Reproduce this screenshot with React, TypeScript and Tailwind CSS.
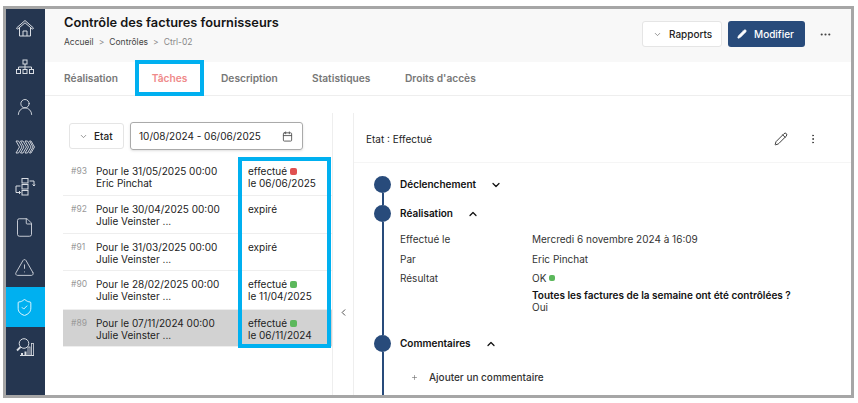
import { Calendar, ChevronDown, ChevronLeft, ChevronUp, EllipsisVertical, Ellipsis, File, Pencil, Plus, ShieldCheck, TriangleAlert, UserRound } from "lucide-react";

const HomeIcon = () => (
	<svg width="22" height="22" viewBox="0 0 22 22" fill="none" stroke="currentColor" strokeWidth="1">
		<path d="M2.500 11 11 3.500l8.500 7.500-1 1.200L11 5.800l-7.500 6.400z" />
		<path d="M5.500 11v8h11v-8" />
		<path d="M9 19v-5h4v5" />
	</svg>
);

const NetworkIcon = () => (
	<svg width="22" height="22" viewBox="0 0 22 22" fill="none" stroke="currentColor" strokeWidth="1">
		<rect x="9" y="4" width="4" height="4" />
		<path d="M11 8v3M4.500 13.500V11h13v2.500M11 11v2.500" />
		<rect x="2.500" y="13.500" width="4" height="4" />
		<rect x="9" y="13.500" width="4" height="4" />
		<rect x="15.500" y="13.500" width="4" height="4" />
	</svg>
);

const Chevrons = () => (
	<svg width="22" height="22" viewBox="0 0 22 22" fill="none" stroke="currentColor" strokeWidth="0.9">
		<path d="M2 5h2.500L8 11l-3.500 6H2l3.500-6z" />
		<path d="M6.500 5H9l3.500 6L9 17H6.500L10 11z" />
		<path d="M11 5h2.500L17 11l-3.500 6H11l3.500-6z" />
		<path d="M15.500 5H17l3.500 6-3.500 6h-1.500l3.500-6z" />
	</svg>
);

const Flow = () => (
	<svg width="22" height="22" viewBox="0 0 22 22" fill="none" stroke="currentColor" strokeWidth="1">
		<rect x="8" y="2.500" width="6" height="4.500" />
		<rect x="8" y="8.500" width="6" height="4.500" />
		<rect x="8" y="14.500" width="6" height="4.500" />
		<path d="M15.500 5H20v5M18.500 8.500l1.500 1.500 1-1.500" />
		<path d="M6.500 10H2v6.500h4.500M5 15l1.500 1.500L5 18" />
	</svg>
);

const SearchChart = () => (
	<svg width="22" height="22" viewBox="0 0 22 22" fill="none" stroke="currentColor" strokeWidth="1">
		<circle cx="10" cy="7.500" r="4.800" />
		<path d="M6.500 11 3 14.500" strokeWidth="1.800" />
		<path d="M6 19.500h14" />
		<rect x="7" y="17" width="2" height="2.500" fill="currentColor" stroke="none" />
		<rect x="10.500" y="15.500" width="2" height="4" fill="currentColor" stroke="none" />
		<rect x="14" y="11" width="2" height="8.500" strokeWidth="0.800" />
		<rect x="17.500" y="7.500" width="2" height="12" strokeWidth="0.800" />
	</svg>
);

const sideItems = [
	{ icon: <HomeIcon />, height: "h-[38px]" },
	{ icon: <NetworkIcon />, height: "h-10" },
	{ icon: <UserRound size={20} strokeWidth={1.1} />, height: "h-10" },
	{ icon: <Chevrons />, height: "h-10" },
	{ icon: <Flow />, height: "h-10" },
	{ icon: <File size={21} strokeWidth={1} />, height: "h-10" },
	{ icon: <TriangleAlert size={21} strokeWidth={1} />, height: "h-10" },
	{ icon: <ShieldCheck size={19} strokeWidth={1.1} />, height: "h-10", active: true },
	{ icon: <SearchChart />, height: "h-10" },
];

const tabs = [
	{ label: "Réalisation", className: "ml-[19px] w-[71px]" },
	{ label: "Tâches", className: "w-[69px] justify-center text-[#ef8a8a] border-b border-[#ef8a8a]" },
	{ label: "Description", className: "ml-[17px] w-[91px]" },
	{ label: "Statistiques", className: "w-[93px]" },
	{ label: "Droits d'accès", className: "w-[100px]" },
];

type Task = {
	id: string;
	due: string;
	who: string;
	status: string;
	dot?: string;
	date?: string;
	selected?: boolean;
	height: string;
};

const tasks: Task[] = [
	{ id: "#93", due: "Pour le 31/05/2025 00:00", who: "Eric Pinchat", status: "effectué", dot: "bg-[#e05050]", date: "le 06/06/2025", height: "h-[38px]" },
	{ id: "#92", due: "Pour le 30/04/2025 00:00", who: "Julie Veinster ...", status: "expiré", height: "h-[38px]" },
	{ id: "#91", due: "Pour le 31/03/2025 00:00", who: "Julie Veinster ...", status: "expiré", height: "h-[37px]" },
	{ id: "#90", due: "Pour le 28/02/2025 00:00", who: "Julie Veinster ...", status: "effectué", dot: "bg-[#5cb85c]", date: "le 11/04/2025", height: "h-[39px]" },
	{ id: "#89", due: "Pour le 07/11/2024 00:00", who: "Julie Veinster ...", status: "effectué", dot: "bg-[#5cb85c]", date: "le 06/11/2024", selected: true, height: "h-[37px]" },
];

const Node = () => (
	<div className="flex w-[17px] flex-col items-center self-stretch">
		<div className="h-[17px] w-[17px] shrink-0 rounded-full bg-[#284b7b]" />
		<div className="w-[2px] flex-1 bg-[#284b7b]" />
	</div>
);

const App = () => {
	return (
		<div className="h-[403px] w-[858px] overflow-hidden bg-white pl-[3px] pt-[6px] font-['Inter',sans-serif] text-[#222]">
			<div className="relative flex h-[392px] w-[851px] border-[3px] border-[#a6a6a6]">
				<aside className="flex w-[39px] shrink-0 flex-col bg-[#253650] text-[#d9dde3]">
					{sideItems.map((item, i) => (
						<div key={i} className={`flex items-center justify-center pr-[2px] ${item.height} ${item.active ? "bg-[#00b0f0] text-white" : ""}`}>
							{item.icon}
						</div>
					))}
				</aside>

				<main className="flex min-w-0 flex-1 flex-col">
					<header className="flex h-[53px] shrink-0 items-start bg-[#f8f8f8] pl-[19px] pr-[19px] pt-[12px]">
						<div className="-mt-[7px] flex-1">
							<h1 className="text-[12.8px] font-semibold leading-[18px] text-[#151515]">Contrôle des factures fournisseurs</h1>
							<div className="mt-[4px] flex items-center text-[8.5px] leading-[12px] text-[#444]">
								Accueil
								<span className="mx-[5px] text-[#888]">&gt;</span>
								Contrôles
								<span className="mx-[5px] text-[#888]">&gt;</span>
								<span className="text-[#888]">Ctrl-02</span>
							</div>
						</div>
						<button className="flex h-[26px] w-[80px] items-center gap-[7px] rounded-[3px] border border-[#e5e5e5] bg-white pl-[10px] text-[10px] font-medium">
							<ChevronDown size={9} className="text-[#777]" />
							Rapports
						</button>
						<button className="ml-[6px] flex h-[26px] w-[77px] items-center gap-[7px] rounded-[3px] bg-[#284b7b] pl-[9px] text-[10px] font-medium text-white">
							<Pencil size={10} fill="white" />
							Modifier
						</button>
						<Ellipsis size={13} className="ml-[14px] mt-[7px] text-[#444]" />
					</header>

					<nav className="flex h-[34px] shrink-0 border-b border-[#eeeeee] pt-[1px] text-[10.2px] font-semibold text-[#777]">
						{tabs.map((tab) => (
							<div key={tab.label} className={`flex items-center ${tab.className}`}>
								{tab.label}
							</div>
						))}
					</nav>

					<div className="flex min-h-0 flex-1">
						<section className="mt-[17px] w-[288px] shrink-0 border-r border-[#eeeeee] pl-[18px] pt-[9px]">
							<div className="ml-[6px] flex items-center gap-[6px]">
								<button className="flex h-[26px] w-[55px] items-center gap-[6px] rounded-[3px] border border-[#e5e5e5] pl-[9px] text-[10px] font-medium">
									<ChevronDown size={9} className="text-[#777]" />
									Etat
								</button>
								<div className="flex h-[28px] w-[173px] items-center justify-between rounded-[3px] border border-[#aaaaaa] pl-[8px] pr-[9px] text-[10px] shadow-sm">
									10/08/2024 - 06/06/2025
									<Calendar size={11} className="text-[#555]" />
								</div>
							</div>
							<div className="mt-[8px] w-[269px]">
								{tasks.map((task) => (
									<div key={task.id} className={`flex border-b border-[#eeeeee] pt-[7px] text-[10px] leading-[12px] ${task.height} ${task.selected ? "bg-[#d2d2d2]" : ""}`}>
										<span className="ml-[8px] w-[25px] text-[8.5px] text-[#999]">{task.id}</span>
										<div className="w-[152px]">
											<div>{task.due}</div>
											<div>{task.who}</div>
										</div>
										<div>
											<div className="flex items-center gap-[3px]">
												{task.status}
												{task.dot && <span className={`h-[7px] w-[7px] rounded-[2px] ${task.dot}`} />}
											</div>
											{task.date && <div>{task.date}</div>}
										</div>
									</div>
								))}
							</div>
						</section>

						<div className="mt-[17px] flex w-[21px] shrink-0 justify-center border-r border-[#eeeeee] pt-[194px]">
							<ChevronLeft size={11} className="text-[#444]" />
						</div>

						<section className="flex min-w-0 flex-1 flex-col">
							<div className="flex h-[67px] shrink-0 items-center border-b border-[#f5f5f5] pl-[12px] pr-[32px] pt-[20px] text-[10px]">
								<span className="flex-1">Etat : Effectué</span>
								<Pencil size={14} strokeWidth={1.5} className="text-[#222]" />
								<EllipsisVertical size={12} className="ml-[19px] text-[#444]" />
							</div>
							<div className="flex flex-1 flex-col pl-[20px] pt-[13px]">
								<div className="flex h-[29px] gap-[9px]">
									<Node />
									<div className="flex h-[17px] items-center gap-[14px] text-[10px] font-semibold text-[#111]">
										Déclenchement
										<ChevronDown size={12} strokeWidth={2.5} />
									</div>
								</div>
								<div className="flex h-[130px] gap-[9px]">
									<Node />
									<div className="min-w-0 flex-1">
										<div className="flex h-[17px] items-center gap-[14px] text-[10px] font-semibold text-[#111]">
											Réalisation
											<ChevronUp size={12} strokeWidth={2.5} />
										</div>
										<div className="mt-[11px] grid grid-cols-[132px_1fr] text-[10px] leading-[12px] text-[#333]">
											<div className="h-[20px]">Effectué le</div>
											<div>Mercredi 6 novembre 2024 à 16:09</div>
											<div className="h-[19px]">Par</div>
											<div>Eric Pinchat</div>
											<div>Résultat</div>
											<div>
												<div className="flex items-center gap-[3px]">
													OK <span className="h-[6px] w-[6px] rounded-[2px] bg-[#5cb85c]" />
												</div>
												<div className="mt-[5px] font-semibold text-[#111]">Toutes les factures de la semaine ont été contrôlées ?</div>
												<div>Oui</div>
											</div>
										</div>
									</div>
								</div>
								<div className="flex flex-1 gap-[9px]">
									<Node />
									<div>
										<div className="flex h-[17px] items-center gap-[14px] text-[10px] font-semibold text-[#111]">
											Commentaires
											<ChevronUp size={12} strokeWidth={2.5} />
										</div>
										<div className="ml-[11px] mt-[18px] flex items-center gap-[11px] text-[10px] font-medium text-[#333]">
											<Plus size={7} className="text-[#666]" />
											Ajouter un commentaire
										</div>
									</div>
								</div>
							</div>
						</section>
					</div>
				</main>

				<div className="absolute left-[129px] top-[51px] h-[36px] w-[69px] border-[4px] border-[#00b0f0]" />
				<div className="absolute left-[232px] top-[148px] h-[191px] w-[93px] border-[4px] border-[#00b0f0]" />
			</div>
		</div>
	);
};

export default App;
